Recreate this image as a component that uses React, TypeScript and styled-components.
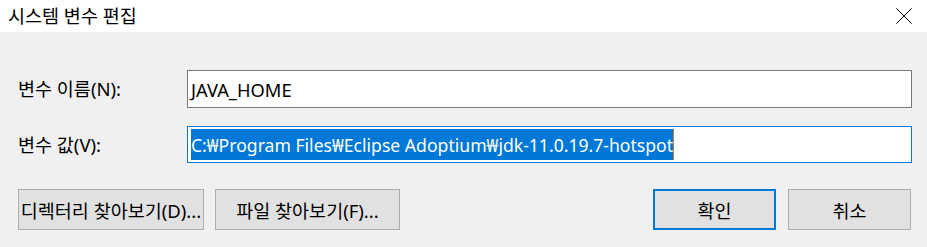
import React from 'react'
import styled, { createGlobalStyle } from 'styled-components'

const GlobalStyle = createGlobalStyle`
  html, body {
    margin: 0;
    padding: 0;
    background: #f0f0f0;
    overflow: hidden;
  }
  * {
    box-sizing: border-box;
  }
`

const font = `"Noto Sans", "Noto Sans CJK KR", sans-serif`

const Window = styled.div`
  width: 927px;
  height: 247px;
  display: flex;
  flex-direction: column;
  background: #f0f0f0;
  font-family: ${font};
  color: #000;
`

const TitleBar = styled.div`
  height: 32px;
  background: #fff;
  display: flex;
  align-items: center;
  justify-content: space-between;
  padding-left: 8px;
`

const Title = styled.span`
  font-size: 18.5px;
  line-height: 1;
`

const CloseButton = styled.button`
  width: 46px;
  height: 32px;
  border: none;
  background: transparent;
  display: flex;
  align-items: center;
  justify-content: center;
  padding: 0;
`

const Body = styled.div`
  flex: 1;
  display: flex;
  flex-direction: column;
  padding: 38px 15px 0 18px;
`

const Form = styled.div`
  display: grid;
  grid-template-columns: 169px 725px;
  row-gap: 18px;
  align-items: center;
`

const Label = styled.label`
  font-size: 18.5px;
  line-height: 1;
  margin-top: 1px;
`

const Field = styled.div<{ $focused?: boolean }>`
  height: ${(p) => (p.$focused ? '37px' : '38px')};
  background: #fff;
  border: 1px solid ${(p) => (p.$focused ? '#0078d7' : '#7a7a7a')};
  padding: 2px 3px;
  display: flex;
  align-items: center;
  font-size: 18.3px;
  white-space: nowrap;
`

const Selected = styled.span`
  background: #0078d7;
  color: #fff;
  height: 100%;
  display: flex;
  align-items: center;
  font-size: 17.6px;
  box-shadow: 1px 0 0 #c87a3c;
`

const ButtonRow = styled.div`
  display: flex;
  justify-content: space-between;
  margin-top: 26px;
  padding-right: 1px;
`

const ButtonGroup = styled.div<{ $gap: number }>`
  display: flex;
  gap: ${(p) => p.$gap}px;
`

const Button = styled.button<{ $width: number; $default?: boolean }>`
  width: ${(p) => p.$width}px;
  height: 41px;
  background: #e1e1e1;
  border: ${(p) => (p.$default ? '2px solid #0078d7' : '1px solid #adadad')};
  font-family: ${font};
  font-size: 18.5px;
  color: #000;
  padding: 0;
  white-space: nowrap;
  display: flex;
  align-items: center;
  justify-content: center;
`

export default function App() {
  return (
    <>
      <GlobalStyle />
      <Window>
        <TitleBar>
          <Title>시스템 변수 편집</Title>
          <CloseButton aria-label="닫기">
            <svg width="16" height="16" viewBox="0 0 16 16">
              <path d="M0.5 0.5 L15.5 15.5 M15.5 0.5 L0.5 15.5" stroke="#000" strokeWidth="1" />
            </svg>
          </CloseButton>
        </TitleBar>
        <Body>
          <Form>
            <Label>변수 이름(N):</Label>
            <Field>JAVA_HOME</Field>
            <Label>변수 값(V):</Label>
            <Field $focused>
              <Selected>C:₩Program Files₩Eclipse Adoptium₩jdk-11.0.19.7-hotspot</Selected>
            </Field>
          </Form>
          <ButtonRow>
            <ButtonGroup $gap={11}>
              <Button $width={186}>디렉터리 찾아보기(D)...</Button>
              <Button $width={185}>파일 찾아보기(F)...</Button>
            </ButtonGroup>
            <ButtonGroup $gap={12}>
              <Button $width={123} $default>확인</Button>
              <Button $width={123}>취소</Button>
            </ButtonGroup>
          </ButtonRow>
        </Body>
      </Window>
    </>
  )
}
